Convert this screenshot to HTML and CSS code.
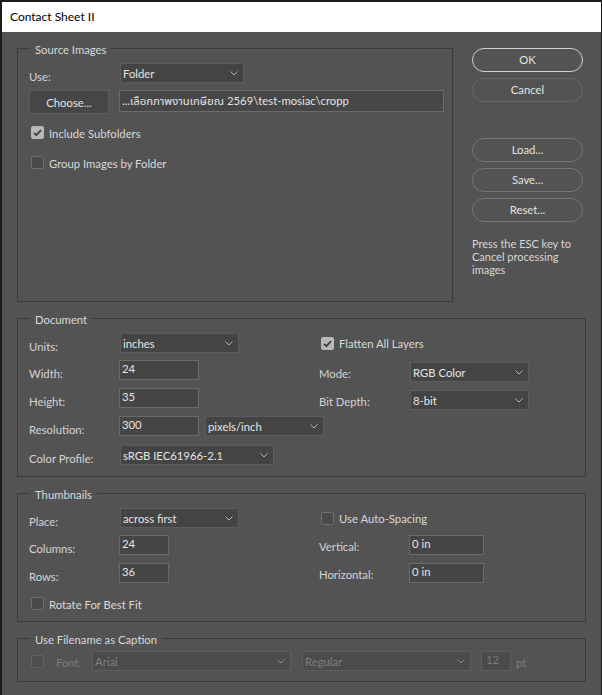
FILE: index.html
```html
<!DOCTYPE html>
<html>
<head>
<meta charset="utf-8">
<title>Contact Sheet II</title>
<link rel="stylesheet" href="styles.css">
</head>
<body>
<div class="window">
  <div class="titlebar">Contact Sheet II</div>
  <div class="dialog">
    <div class="top">
      <div class="group source">
        <span class="group-title">Source Images</span>
        <div class="row r-use">
          <span class="label">Use:</span>
          <div class="select w-folder"><span>Folder</span><svg class="chev" width="8" height="5" viewBox="0 0 8 5"><path d="M0.5 0.5 L4 4 L7.5 0.5" fill="none" stroke="#b4b4b4" stroke-width="1"/></svg></div>
        </div>
        <div class="row r-choose">
          <div class="btn-rect">Choose...</div>
          <div class="input path">...เลือกภาพงานเกษียณ 2569\test-mosiac\cropp</div>
        </div>
        <div class="check-row r-inc">
          <span class="cb checked"><svg width="13" height="13" viewBox="0 0 13 13"><path d="M3 6.8 L5.4 9.2 L10 4.2" fill="none" stroke="#3e3e3e" stroke-width="1.8"/></svg></span>
          <span class="cb-label">Include Subfolders</span>
        </div>
        <div class="check-row r-group">
          <span class="cb"></span>
          <span class="cb-label">Group Images by Folder</span>
        </div>
      </div>
      <div class="side">
        <div class="pill primary">OK</div>
        <div class="pill dim">Cancel</div>
        <div class="pill gap-big">Load...</div>
        <div class="pill">Save...</div>
        <div class="pill">Reset...</div>
        <p class="hint">Press the ESC key to Cancel processing images</p>
      </div>
    </div>

    <div class="group document">
      <span class="group-title">Document</span>
      <div class="cols">
        <div class="col-left">
          <div class="row">
            <span class="label">Units:</span>
            <div class="select w-119"><span>inches</span><svg class="chev" width="8" height="5" viewBox="0 0 8 5"><path d="M0.5 0.5 L4 4 L7.5 0.5" fill="none" stroke="#b4b4b4" stroke-width="1"/></svg></div>
          </div>
          <div class="row mt7">
            <span class="label">Width:</span>
            <div class="input num w-80">24</div>
          </div>
          <div class="row mt8">
            <span class="label">Height:</span>
            <div class="input num w-80">35</div>
          </div>
          <div class="row mt8">
            <span class="label">Resolution:</span>
            <div class="input num w-80">300</div>
            <div class="select w-119 ml6"><span>pixels/inch</span><svg class="chev" width="8" height="5" viewBox="0 0 8 5"><path d="M0.5 0.5 L4 4 L7.5 0.5" fill="none" stroke="#b4b4b4" stroke-width="1"/></svg></div>
          </div>
          <div class="row mt9">
            <span class="label">Color Profile:</span>
            <div class="select w-154"><span>sRGB IEC61966-2.1</span><svg class="chev" width="8" height="5" viewBox="0 0 8 5"><path d="M0.5 0.5 L4 4 L7.5 0.5" fill="none" stroke="#b4b4b4" stroke-width="1"/></svg></div>
          </div>
        </div>
        <div class="col-right">
          <div class="check-row rc">
            <span class="cb checked"><svg width="13" height="13" viewBox="0 0 13 13"><path d="M3 6.8 L5.4 9.2 L10 4.2" fill="none" stroke="#3e3e3e" stroke-width="1.8"/></svg></span>
            <span class="cb-label">Flatten All Layers</span>
          </div>
          <div class="row mt12">
            <span class="label">Mode:</span>
            <div class="select w-119"><span>RGB Color</span><svg class="chev" width="8" height="5" viewBox="0 0 8 5"><path d="M0.5 0.5 L4 4 L7.5 0.5" fill="none" stroke="#b4b4b4" stroke-width="1"/></svg></div>
          </div>
          <div class="row mt8">
            <span class="label">Bit Depth:</span>
            <div class="select w-119"><span>8-bit</span><svg class="chev" width="8" height="5" viewBox="0 0 8 5"><path d="M0.5 0.5 L4 4 L7.5 0.5" fill="none" stroke="#b4b4b4" stroke-width="1"/></svg></div>
          </div>
        </div>
      </div>
    </div>

    <div class="group thumbs">
      <span class="group-title">Thumbnails</span>
      <div class="cols">
        <div class="col-left">
          <div class="row">
            <span class="label">Place:</span>
            <div class="select w-119"><span>across first</span><svg class="chev" width="8" height="5" viewBox="0 0 8 5"><path d="M0.5 0.5 L4 4 L7.5 0.5" fill="none" stroke="#b4b4b4" stroke-width="1"/></svg></div>
          </div>
          <div class="row mt7">
            <span class="label">Columns:</span>
            <div class="input num w-50">24</div>
          </div>
          <div class="row mt8">
            <span class="label">Rows:</span>
            <div class="input num w-50">36</div>
          </div>
          <div class="check-row r-rotate">
            <span class="cb"></span>
            <span class="cb-label">Rotate For Best Fit</span>
          </div>
        </div>
        <div class="col-right">
          <div class="check-row rc">
            <span class="cb"></span>
            <span class="cb-label">Use Auto-Spacing</span>
          </div>
          <div class="row mt10">
            <span class="label">Vertical:</span>
            <div class="input num w-75">0 in</div>
          </div>
          <div class="row mt8">
            <span class="label">Horizontal:</span>
            <div class="input num w-75">0 in</div>
          </div>
        </div>
      </div>
    </div>

    <div class="group caption">
      <span class="group-title">Use Filename as Caption</span>
      <div class="row cap-row">
        <span class="cb disabled"></span>
        <span class="label-dis font-label">Font:</span>
        <div class="select dis w-199"><span>Arial</span><svg class="chev" width="8" height="5" viewBox="0 0 8 5"><path d="M0.5 0.5 L4 4 L7.5 0.5" fill="none" stroke="#8a8a8a" stroke-width="1"/></svg></div>
        <div class="select dis w-169 ml11"><span>Regular</span><svg class="chev" width="8" height="5" viewBox="0 0 8 5"><path d="M0.5 0.5 L4 4 L7.5 0.5" fill="none" stroke="#8a8a8a" stroke-width="1"/></svg></div>
        <div class="input dis-input w-30">12</div>
        <span class="label-dis pt">pt</span>
      </div>
    </div>
  </div>
</div>
</body>
</html>
```
FILE: styles.css
```css
* { box-sizing: border-box; }
html, body { margin: 0; padding: 0; }
body {
  background: #1c1c1c;
  font-family: "Lato", "Noto Sans Thai", "Tahoma", "DejaVu Sans", sans-serif;
  font-size: 11.3px;
  color: #d6d6d6;
  width: 602px;
  height: 695px;
  overflow: hidden;
}
.window {
  margin: 2px 1px 0 2px;
  height: 693px;
  background: #535353;
}
.titlebar {
  height: 30px;
  background: #ffffff;
  color: #000;
  font-size: 12px;
  line-height: 30px;
  padding-left: 8px;
}
.dialog {
  padding: 16px 15px 0 15px;
}
.top {
  display: flex;
  align-items: flex-start;
}
.group {
  border: 1px solid #3b3b3b;
  position: relative;
}
.group-title {
  position: absolute;
  top: -8px;
  left: 12px;
  padding: 0 5px;
  line-height: 17px;
  background: #535353;
  color: #d8d8d8;
}
.source {
  width: 436px;
  height: 254px;
  padding: 14px 8px 0 11px;
}
.document { margin-top: 16px; height: 159px; padding: 14px 8px 0 11px; }
.thumbs { margin-top: 16px; height: 129px; padding: 14px 8px 0 11px; }
.caption { margin-top: 16px; height: 44px; padding: 12px 8px 0 13px; }

.row {
  display: flex;
  align-items: center;
  height: 20px;
}
.label {
  width: 91px;
  flex: none;
  padding-top: 6px;
  color: #d4d4d4;
}
.col-right .label { padding-top: 3px; }
.mt7 { margin-top: 7px; }
.mt8 { margin-top: 8px; }
.mt9 { margin-top: 9px; }
.mt10 { margin-top: 10px; }
.mt12 { margin-top: 12px; }
.ml6 { margin-left: 6px; }
.ml11 { margin-left: 11px; }

.select {
  position: relative;
  height: 20px;
  background: #444444;
  border: 1px solid #5c5c5c;
  color: #e4e4e4;
  padding-left: 2px;
  line-height: 19px;
  white-space: nowrap;
  flex: none;
}
.select .chev {
  position: absolute;
  right: 5px;
  top: 7px;
}
.select.dis { background: #4b4b4b; border-color: #5d5d5d; color: #7f7f7f; }
.input {
  height: 20px;
  background: #454545;
  border: 1px solid #6a6a6a;
  color: #e4e4e4;
  padding-left: 2px;
  line-height: 16px;
  white-space: nowrap;
  flex: none;
}
.num { margin-left: -1px; }
.dis-input { background: #4b4b4b; border-color: #5d5d5d; color: #7a7a7a; margin-left: 10px; padding-left: 4px; }
.w-folder { width: 124px; }
.w-119 { width: 119px; }
.w-154 { width: 154px; }
.w-80 { width: 80px; }
.w-50 { width: 50px; }
.w-75 { width: 75px; }
.w-199 { width: 199px; }
.w-169 { width: 169px; }
.w-30 { width: 30px; }

.r-choose { margin-top: 7px; height: 24px; align-items: flex-start; }
.btn-rect {
  width: 80px;
  height: 24px;
  background: #464646;
  border: 1px solid #5e5e5e;
  color: #e0e0e0;
  text-align: center;
  line-height: 23px;
  flex: none;
}
.path {
  width: 325px;
  height: 22px;
  margin-left: 10px;
  background: #474747;
  line-height: 20px;
  padding-left: 2px;
  overflow: hidden;
}

.check-row {
  display: flex;
  align-items: center;
  height: 13px;
}
.r-inc { margin-top: 12px; }
.r-group { margin-top: 17px; }
.r-rotate { margin-top: 14px; }
.cb {
  width: 13px;
  height: 13px;
  margin-left: 2px;
  border-radius: 2px;
  background: #4a4a4a;
  border: 1px solid #6d6d6d;
  flex: none;
  display: block;
}
.cb svg { display: block; margin: -1px; }
.cb.checked { background: #b7b7b7; border-color: #b7b7b7; }
.cb.disabled { background: #4f4f4f; border-color: #626262; }
.cb-label {
  margin-left: 5px;
  padding-top: 1px;
  color: #d8d8d8;
}
.col-right .cb-label { padding-top: 0; }

.cols { display: flex; }
.col-left { width: 290px; flex: none; }
.col-right { flex: 1; }
.rc { margin-top: 4px; }
.col-right .check-row .cb { margin-left: 2px; }

.side {
  margin-left: 19px;
  width: 111px;
}
.pill {
  height: 24px;
  border: 1px solid #767676;
  border-radius: 12px;
  text-align: center;
  line-height: 22px;
  color: #e2e2e2;
  margin-top: 6px;
}
.pill.primary { margin-top: 0; border-color: #cfcfcf; }
.pill.dim { border-color: #686868; }
.pill.gap-big { margin-top: 36px; }
.hint {
  margin: 15px 0 0 0;
  font-size: 11px;
  line-height: 13px;
  color: #d6d6d6;
}

.cap-row { height: 20px; }
.cap-row .cb { margin-left: 0; margin-top: 1px; }
.label-dis { color: #7c7c7c; padding-top: 3px; flex: none; }
.font-label { width: 36px; margin-left: 12px; }
.pt { margin-left: 5px; }
```
